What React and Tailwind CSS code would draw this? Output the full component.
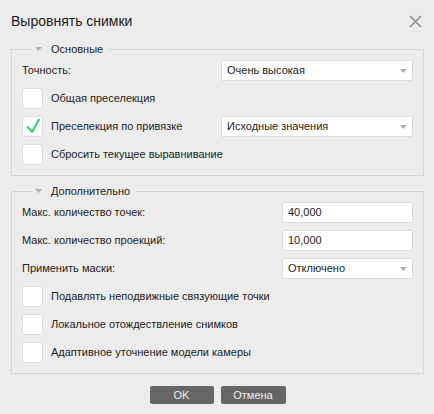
import React from "react";

const font = { fontFamily: '"Liberation Sans", Arial, sans-serif' };

function Arrow() {
  return (
    <svg width="7" height="4" viewBox="0 0 7 4" className="shrink-0">
      <path d="M0 0 L7 0 L3.5 4 Z" fill="#b0b0b0" />
    </svg>
  );
}

function Select({ value, className }) {
  return (
    <div
      className={`h-[21px] bg-white border border-[#dcdcdc] rounded-[2px] flex items-center justify-between pl-[5px] pr-[5px] text-[11px] text-[#222] ${className}`}
    >
      <span>{value}</span>
      <Arrow />
    </div>
  );
}

function Input({ value }) {
  return (
    <div className="w-[131px] h-[21px] bg-white border border-[#dcdcdc] rounded-[2px] flex items-center pl-[5px] text-[11px] text-[#222]">
      {value}
    </div>
  );
}

function Checkbox({ checked }) {
  return (
    <div className="w-[21px] h-[21px] bg-white border border-[#dcdcdc] rounded-[3px] shrink-0 flex items-center justify-center">
      {checked && (
        <svg width="21" height="21" viewBox="0 0 21 21">
          <path
            d="M5 11 L10 16.5 L17.5 3"
            fill="none"
            stroke="#33cc66"
            strokeWidth="2.2"
            strokeLinecap="round"
            strokeLinejoin="round"
          />
        </svg>
      )}
    </div>
  );
}

function CheckRow({ label, checked, children }) {
  return (
    <div className="flex items-center h-[21px]">
      <Checkbox checked={checked} />
      <span className="ml-[8px] text-[11px] text-[#222] flex-1">{label}</span>
      {children}
    </div>
  );
}

function Group({ title, children }) {
  return (
    <fieldset className="border border-[#d6d6d6] pl-[10px] pr-[10px] pt-[4px] pb-[10px] m-0">
      <legend className="ml-[10px] pl-[3px] pr-[6px] h-[14px] flex items-center">
        <Arrow />
        <span className="ml-[9px] text-[11px] leading-[14px] text-[#222]">{title}</span>
      </legend>
      <div className="flex flex-col gap-[7px]">{children}</div>
    </fieldset>
  );
}

export default function App() {
  return (
    <div className="w-[434px] h-[414px] bg-[#ececec] overflow-hidden" style={font}>
      <div className="flex items-center justify-between pl-[11px] pr-[12px] pt-[9px] h-[42px] pb-[9px]">
        <span className="text-[14px] text-[#1a1a1a] leading-[24px]">Выровнять снимки</span>
        <svg width="13" height="13" viewBox="0 0 13 13">
          <path d="M1 1 L12 12 M12 1 L1 12" stroke="#8c8c8c" strokeWidth="1.6" />
        </svg>
      </div>
      <div className="pl-[11px] pr-[10px] flex flex-col">
        <Group title="Основные">
          <div className="flex items-center h-[21px]">
            <span className="flex-1 text-[11px] text-[#222]">Точность:</span>
            <Select value="Очень высокая" className="w-[192px]" />
          </div>
          <CheckRow label="Общая преселекция" />
          <CheckRow label="Преселекция по привязке" checked>
            <Select value="Исходные значения" className="w-[192px]" />
          </CheckRow>
          <CheckRow label="Сбросить текущее выравнивание" />
        </Group>
        <div className="h-[8px]" />
        <Group title="Дополнительно">
          <div className="flex items-center h-[21px]">
            <span className="flex-1 text-[11px] text-[#222]">Макс. количество точек:</span>
            <Input value="40,000" />
          </div>
          <div className="flex items-center h-[21px]">
            <span className="flex-1 text-[11px] text-[#222]">Макс. количество проекций:</span>
            <Input value="10,000" />
          </div>
          <div className="flex items-center h-[21px]">
            <span className="flex-1 text-[11px] text-[#222]">Применить маски:</span>
            <Select value="Отключено" className="w-[131px]" />
          </div>
          <CheckRow label="Подавлять неподвижные связующие точки" />
          <CheckRow label="Локальное отождествление снимков" />
          <CheckRow label="Адаптивное уточнение модели камеры" />
        </Group>
        <div className="flex justify-center gap-[7px] mt-[12px]">
          <div className="w-[64px] h-[18px] bg-[#666666] rounded-[2px] flex items-center justify-center text-[11px] text-[#eeeeee]">
            OK
          </div>
          <div className="w-[65px] h-[18px] bg-[#666666] rounded-[2px] flex items-center justify-center text-[11px] text-[#eeeeee]">
            Отмена
          </div>
        </div>
      </div>
    </div>
  );
}
